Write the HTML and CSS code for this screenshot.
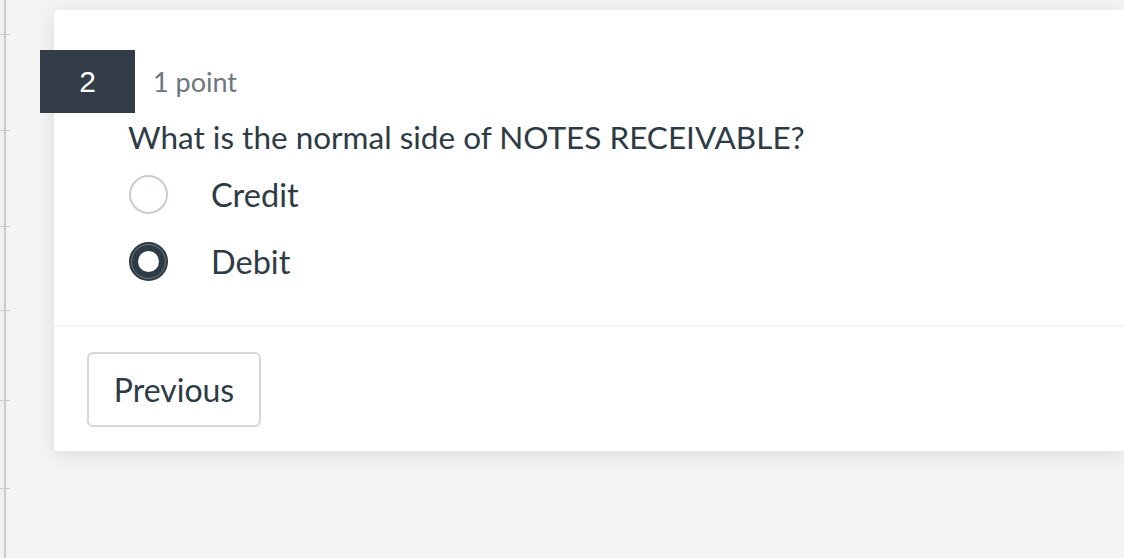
FILE: index.html
```html
<!DOCTYPE html>
<html lang="en">
<head>
    <meta charset="UTF-8">
    <meta name="viewport" content="width=device-width, initial-scale=1.0">
    <title>Quiz - Question 2</title>
    <link rel="stylesheet" href="styles.css">
</head>
<body>
    <div class="page">
        <div class="rail">
            <div class="tick" style="top: 34px"></div>
            <div class="tick" style="top: 130px"></div>
            <div class="tick" style="top: 226px"></div>
            <div class="tick" style="top: 310px"></div>
            <div class="tick" style="top: 400px"></div>
            <div class="tick" style="top: 488px"></div>
        </div>

        <div class="card">
            <div class="question">
                <div class="question-head">
                    <div class="number">2</div>
                    <div class="points">1 point</div>
                </div>
                <p class="prompt">What is the normal side of NOTES RECEIVABLE?</p>
                <div class="choices">
                    <label class="choice">
                        <span class="radio"></span>
                        <span class="choice-text">Credit</span>
                    </label>
                    <label class="choice">
                        <span class="radio checked"></span>
                        <span class="choice-text">Debit</span>
                    </label>
                </div>
            </div>
            <div class="card-footer">
                <button class="btn">Previous</button>
            </div>
        </div>
    </div>
</body>
</html>
```

FILE: styles.css
```css
html, body {
    margin: 0;
    padding: 0;
}

body {
    font-family: Lato, "Noto Sans", sans-serif;
    background-color: #f4f4f4;
    color: #2d3b45;
    overflow: hidden;
}

.page {
    display: flex;
    height: 558px;
}

/* leftover of the side nav */
.rail {
    position: relative;
    width: 4px;
    flex-shrink: 0;
    border-right: 2px solid #c9cdd1;
    background-color: #f1f1f1;
}

.tick {
    position: absolute;
    left: 0;
    width: 10px;
    height: 1px;
    background-color: #c9cdd1;
}

.card {
    margin: 10px 0 0 48px;
    flex: 1;
    align-self: flex-start;
    background-color: #ffffff;
    border-radius: 4px 0 0 4px;
    box-shadow: 0 4px 20px rgba(0, 0, 0, 0.1);
}

.question {
    padding: 40px 0 44px 0;
    border-bottom: 2px solid #f4f4f4;
}

.question-head {
    display: flex;
    align-items: center;
    margin-left: -14px;
}

.number {
    width: 95px;
    height: 63px;
    background-color: #333d47;
    color: #ffffff;
    font-family: "Liberation Sans", Arial, sans-serif;
    font-size: 30px;
    display: flex;
    align-items: center;
    justify-content: center;
}

.points {
    margin-left: 18px;
    font-size: 27px;
    color: #6b7780;
}

.prompt {
    margin: 2px 0 0 74px;
    font-size: 31.5px;
    line-height: 44px;
}

.choices {
    margin-left: 75px;
    margin-top: 16px;
    display: flex;
    flex-direction: column;
    gap: 28px;
}

.choice {
    display: flex;
    align-items: center;
    height: 39px;
}

.radio {
    width: 35px;
    height: 35px;
    border: 2px solid #c7cdd1;
    border-radius: 50%;
    box-sizing: content-box;
}

.radio.checked {
    width: 21px;
    height: 21px;
    border: 9px solid #2d3b45;
    outline: 1px solid rgba(255, 255, 255, 0.3);
    outline-offset: -3px;
}

.choice-text {
    margin-left: 43px;
    font-size: 32.5px;
    line-height: 39px;
}

.card-footer {
    padding: 25px 33px 24px;
}

.btn {
    font-family: Lato, "Noto Sans", sans-serif;
    font-size: 32px;
    color: #2d3b45;
    background-color: #ffffff;
    border: 2px solid #d8d8d8;
    border-radius: 6px;
    width: 174px;
    height: 75px;
    display: block;
}
```
